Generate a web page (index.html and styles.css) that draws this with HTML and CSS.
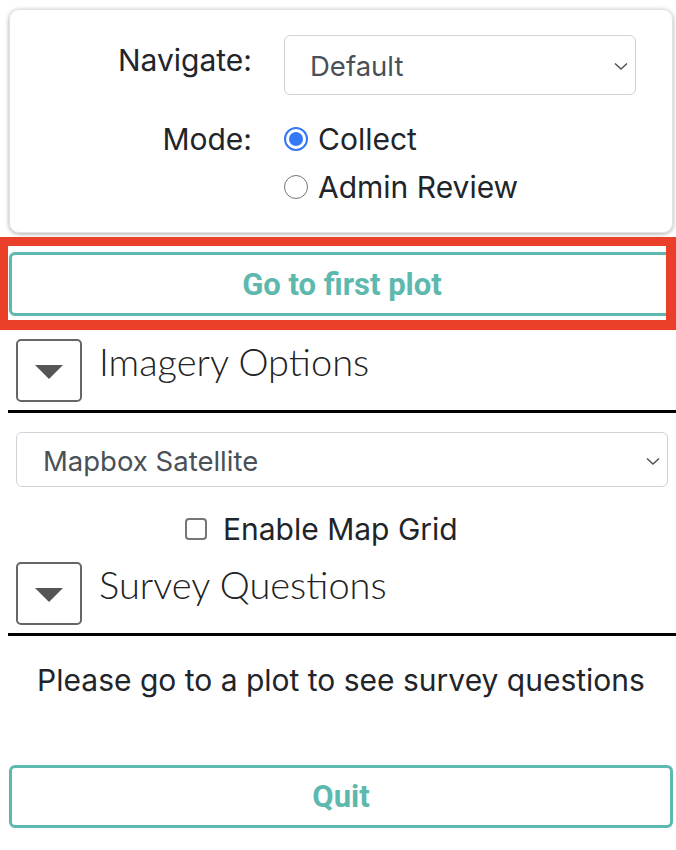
FILE: index.html
```html
<!DOCTYPE html>
<html>
<head>
<meta charset="utf-8">
<link rel="stylesheet" href="styles.css">
</head>
<body>
<div class="panel">
  <div class="card">
    <div class="label nav-label">Navigate:</div>
    <div class="select nav-select">
      <span>Default</span>
      <svg class="chev" width="16" height="10" viewBox="0 0 16 10"><path d="M2 2.5 L8 8 L14 2.5" fill="none" stroke="#495057" stroke-width="1.4"/></svg>
    </div>
    <div class="label mode-label">Mode:</div>
    <div class="radios">
      <div class="radio-row"><span class="radio checked"><span class="dot"></span></span><span>Collect</span></div>
      <div class="radio-row"><span class="radio"></span><span>Admin Review</span></div>
    </div>
  </div>

  <div class="highlight-wrap">
    <button class="btn first-btn">Go to first plot</button>
    <div class="highlight"></div>
  </div>

  <div class="section-head imagery-head">
    <div class="toggle"><svg width="30" height="16" viewBox="0 0 30 16"><path d="M1 1 H29 L15 15 Z" fill="#555"/></svg></div>
    <div class="section-title">Imagery Options</div>
  </div>
  <div class="rule"></div>

  <div class="select map-select">
    <span>Mapbox Satellite</span>
    <svg class="chev" width="16" height="10" viewBox="0 0 16 10"><path d="M2 2.5 L8 8 L14 2.5" fill="none" stroke="#495057" stroke-width="1.4"/></svg>
  </div>

  <div class="check-row">
    <span class="checkbox"></span><span>Enable Map Grid</span>
  </div>

  <div class="section-head survey-head">
    <div class="toggle"><svg width="30" height="16" viewBox="0 0 30 16"><path d="M1 1 H29 L15 15 Z" fill="#555"/></svg></div>
    <div class="section-title">Survey Questions</div>
  </div>
  <div class="rule"></div>

  <p class="hint">Please go to a plot to see survey questions</p>

  <button class="btn quit-btn">Quit</button>
</div>
</body>
</html>
```

FILE: styles.css
```css
* { box-sizing: border-box; }
html, body { margin: 0; padding: 0; background: #fff; }
body {
  width: 676px;
  font-family: Inter, "Noto Sans", sans-serif;
  color: #212529;
}
.panel {
  padding: 9px 3px 0 9px;
  display: flex;
  flex-direction: column;
}
.card {
  height: 224px;
  border: 1px solid #e2e2e2;
  border-radius: 10px;
  box-shadow: 0 1px 4px rgba(0,0,0,0.35);
  padding: 25px 0 0 0;
  display: grid;
  grid-template-columns: 242px 352px;
  column-gap: 32px;
  row-gap: 20px;
  align-content: start;
}
.label {
  font-size: 30px;
  text-align: right;
  line-height: 48px;
}
.nav-label { line-height: 1; padding-top: 10px; }
.select {
  display: flex;
  align-items: center;
  justify-content: space-between;
  border: 1.5px solid #ced4da;
  border-radius: 6px;
  color: #495057;
  font-size: 27.5px;
  background: #fff;
}
.nav-select { height: 60px; padding: 2px 6px 0 25px; }
.chev { flex: none; }
.radios { display: flex; flex-direction: column; }
.radio-row {
  display: flex;
  align-items: center;
  gap: 10px;
  height: 48px;
  font-size: 30px;
}
.radio {
  width: 24px; height: 24px;
  border-radius: 50%;
  border: 1.5px solid #767676;
  display: flex; align-items: center; justify-content: center;
  flex: none;
}
.radio.checked { border: 2.5px solid #3478f6; }
.radio .dot { width: 14px; height: 14px; border-radius: 50%; background: #3478f6; }

.highlight-wrap {
  position: relative;
  margin-top: 19px;
}
.btn {
  display: block;
  width: 100%;
  height: 64px;
  background: #fff;
  border: 3px solid #5db8ad;
  border-radius: 6px;
  color: #5db8ad;
  font-family: Roboto, "Liberation Sans", sans-serif;
  font-weight: 700;
  font-size: 31px;
  padding: 0;
}
.first-btn { width: 666px; }
.highlight {
  position: absolute;
  left: -9px;
  top: -15px;
  width: 676px;
  height: 93px;
  border: 10px solid #ea4029;
  border-left-width: 8px;
  border-top-width: 9px;
  pointer-events: none;
}
.section-head {
  display: flex;
  align-items: flex-start;
  gap: 17px;
  padding-left: 7px;
}
.imagery-head { margin-top: 23px; }
.survey-head { margin-top: 11px; }
.toggle {
  width: 66px; height: 63px;
  border: 2px solid #666;
  border-radius: 5px;
  display: flex; align-items: center; justify-content: center;
  padding-top: 2px;
  flex: none;
}
.section-title {
  font-family: Lato, sans-serif;
  font-weight: 300;
  font-size: 38px;
  line-height: 1;
  color: #222;
  padding-top: 3px;
}
.rule {
  height: 3px;
  background: #000;
  margin: 8px -3px 0 -1px;
}
.map-select {
  margin: 19px 5px 0 7px;
  height: 55px;
  padding: 2px 6px 0 26px;
}
.check-row {
  display: flex;
  align-items: center;
  gap: 16px;
  padding-left: 176px;
  margin-top: 20px;
  font-size: 30px;
  height: 44px;
}
.checkbox {
  width: 22px; height: 22px;
  border: 2px solid #767676;
  border-radius: 4px;
  flex: none;
}
.hint {
  margin: 24px 0 0 0;
  text-align: center;
  font-size: 30px;
  line-height: 40px;
}
.quit-btn { margin-top: 65px; height: 63px; }
```
